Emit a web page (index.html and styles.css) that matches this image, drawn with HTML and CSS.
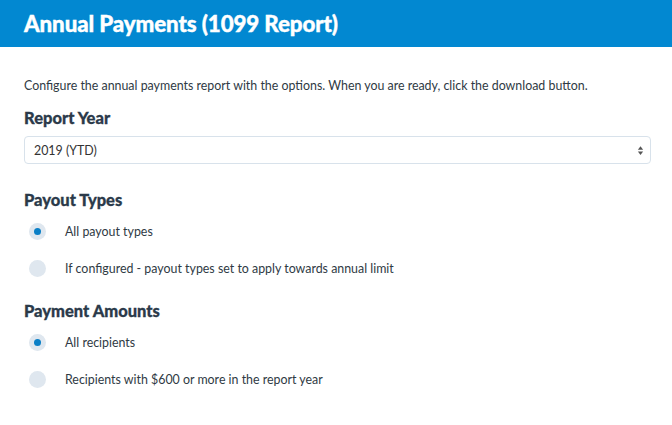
FILE: index.html
```html
<!DOCTYPE html>
<html lang="en">
<head>
    <meta charset="UTF-8">
    <title>Annual Payments (1099 Report)</title>
    <link rel="stylesheet" href="styles.css">
</head>
<body>
    <div class="header">
        <h1>Annual Payments (1099 Report)</h1>
    </div>

    <div class="content">
        <p class="intro">Configure the annual payments report with the options. When you are ready, click the download button.</p>

        <h2>Report Year</h2>
        <div class="select">
            <span>2019 (YTD)</span>
            <svg class="arrows" viewBox="0 0 8 12">
                <path d="M4 1L7 5H1Z"></path>
                <path d="M4 11L7 7H1Z"></path>
            </svg>
        </div>

        <h2 class="section">Payout Types</h2>
        <div class="radio-list">
            <label class="radio checked"><span class="dot"></span>All payout types</label>
            <label class="radio"><span class="dot"></span>If configured - payout types set to apply towards annual limit</label>
        </div>

        <h2 class="section amounts">Payment Amounts</h2>
        <div class="radio-list">
            <label class="radio checked"><span class="dot"></span>All recipients</label>
            <label class="radio"><span class="dot"></span>Recipients with $600 or more in the report year</label>
        </div>
    </div>
</body>
</html>
```

FILE: styles.css
```css
* {
    box-sizing: border-box;
    margin: 0;
    padding: 0;
}

body {
    font-family: Lato, "Open Sans", sans-serif;
    background: white;
    color: #34404b;
}

.header {
    background-color: #0288d1;
    height: 47px;
    padding: 0 24px;
    display: flex;
    align-items: center;
}

.header h1 {
    color: white;
    font-size: 22.3px;
    font-weight: 900;
    letter-spacing: -0.1px;
    -webkit-text-stroke: 0.4px white;
}

.content {
    padding: 31px 21px 0 24px;
}

.intro {
    font-size: 12.4px;
    line-height: 16px;
    color: #2f3a44;
}

h2 {
    font-size: 16.5px;
    font-weight: 900;
    color: #2b3a4a;
    margin-top: 14px;
    line-height: 20px;
    -webkit-text-stroke: 0.3px #2b3a4a;
}

h2.section {
    margin-top: 26px;
}

h2.amounts {
    margin-top: 24px;
}

.select {
    margin-top: 8px;
    height: 28px;
    border: 1px solid #d8e2eb;
    border-radius: 4px;
    display: flex;
    align-items: center;
    justify-content: space-between;
    padding: 0 6px 0 9px;
    font-size: 12.4px;
    color: #333;
}

.arrows {
    width: 7px;
    height: 11px;
    fill: #555;
}

.radio-list {
    margin-top: 13px;
    display: flex;
    flex-direction: column;
    gap: 20px;
}

.amounts + .radio-list {
    margin-top: 13px;
}

.radio {
    display: flex;
    align-items: center;
    font-size: 12.4px;
    line-height: 17px;
    color: #2f3a44;
}

.dot {
    width: 17px;
    height: 17px;
    border-radius: 50%;
    background-color: #dfe7ef;
    margin: 0 19px 0 5px;
    display: flex;
    align-items: center;
    justify-content: center;
}

.radio.checked .dot::after {
    content: "";
    width: 7px;
    height: 7px;
    border-radius: 50%;
    background-color: #0a7fc6;
}
```
